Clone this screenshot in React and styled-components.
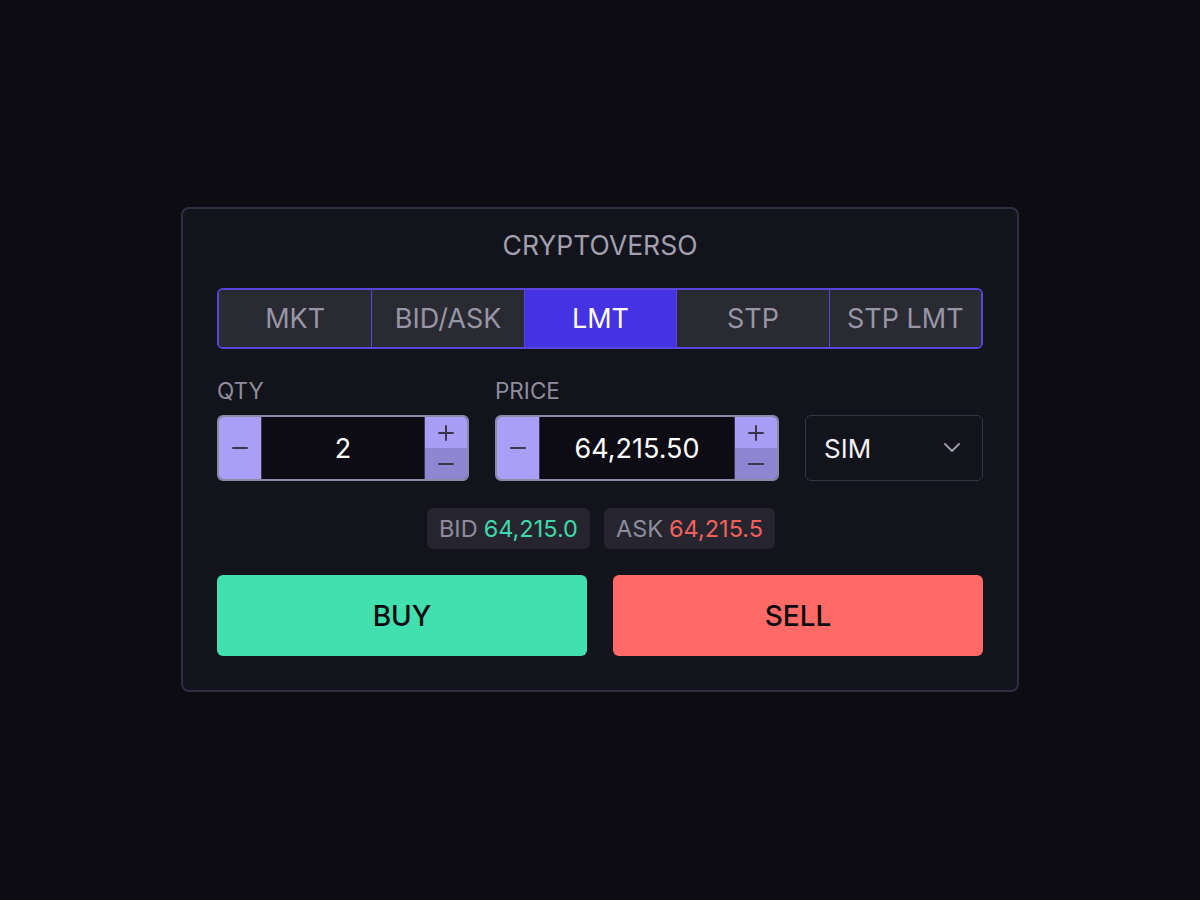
import React from "react";
import styled, { createGlobalStyle } from "styled-components";

const Global = createGlobalStyle`
  html, body { margin: 0; padding: 0; background: #0c0c12; }
  body { font-family: Inter, "Noto Sans", sans-serif; }
  * { box-sizing: border-box; }
`;

const Page = styled.div`
  width: 1200px;
  height: 900px;
  display: flex;
  align-items: flex-start;
  justify-content: center;
  padding-top: 207px;
  background: #0c0c12;
`;

const Card = styled.div`
  width: 838px;
  background: #13131c;
  border: 2px solid #302f42;
  border-radius: 8px;
  padding: 20px 34px 34px;
  display: flex;
  flex-direction: column;
`;

const Title = styled.div`
  text-align: center;
  font-size: 26.5px;
  line-height: 32px;
  color: #a2a0b0;
`;

const Tabs = styled.div`
  margin-top: 27px;
  display: grid;
  grid-template-columns: repeat(5, 1fr);
  height: 61px;
  border: 2px solid #5a46dc;
  border-radius: 6px;
  overflow: hidden;
`;

const Tab = styled.div`
  display: flex;
  align-items: center;
  justify-content: center;
  font-size: 27px;
  color: ${(p) => (p.$active ? "#ffffff" : "#9896a6")};
  background: ${(p) => (p.$active ? "#4532e2" : "#2a2a33")};
  border-left: ${(p) => (p.$first ? "none" : "1px solid #5a46dc")};
`;

const Fields = styled.div`
  margin-top: 28px;
  display: grid;
  grid-template-columns: 252px 284px 1fr;
  column-gap: 26px;
  align-items: end;
`;

const Field = styled.div`
  display: flex;
  flex-direction: column;
  gap: 11px;
`;

const Label = styled.div`
  font-size: 22.5px;
  line-height: 27px;
  color: #8f8d9c;
`;

const Stepper = styled.div`
  height: 66px;
  display: grid;
  grid-template-columns: 42px 1fr 42px;
  border: 2px solid #8c89a6;
  border-radius: 6px;
  overflow: hidden;
  background: #0d0c14;
`;

const SideBtn = styled.div`
  display: flex;
  align-items: center;
  justify-content: center;
  background: ${(p) => p.$bg || "#aa9ef7"};
`;

const Value = styled.div`
  display: flex;
  align-items: center;
  justify-content: center;
  font-size: 27px;
  color: #ffffff;
  background: #0d0c14;
  border-left: 1px solid #3a3850;
  border-right: 1px solid #3a3850;
`;

const RightCol = styled.div`
  display: grid;
  grid-template-rows: 1fr 1fr;
`;

const Select = styled.div`
  height: 66px;
  border: 1px solid #363545;
  border-radius: 6px;
  display: flex;
  align-items: center;
  justify-content: space-between;
  padding: 0 20px 0 18px;
  font-size: 26px;
  color: #f2f2f6;
`;

const Quotes = styled.div`
  margin-top: 27px;
  display: flex;
  justify-content: center;
  gap: 14px;
  padding-left: 2px;
`;

const Chip = styled.div`
  height: 41px;
  padding: 0 12px;
  display: flex;
  align-items: center;
  gap: 6px;
  background: #26252f;
  border-radius: 6px;
  font-size: 23.5px;
  color: #8f8d9c;
`;

const Num = styled.span`
  color: ${(p) => p.$color};
`;

const Actions = styled.div`
  margin-top: 26px;
  display: grid;
  grid-template-columns: 1fr 1fr;
  column-gap: 26px;
`;

const Action = styled.button`
  height: 81px;
  border: none;
  border-radius: 6px;
  background: ${(p) => p.$bg};
  color: #0a0a10;
  font-family: Inter, "Noto Sans", sans-serif;
  font-size: 28px;
  font-weight: 500;
  cursor: pointer;
`;

const Minus = () => (
  <svg width="18" height="18" viewBox="0 0 18 18">
    <line x1="2" y1="9" x2="16" y2="9" stroke="#3a3650" strokeWidth="2" strokeLinecap="round" />
  </svg>
);

const Plus = () => (
  <svg width="18" height="18" viewBox="0 0 18 18">
    <line x1="2" y1="9" x2="16" y2="9" stroke="#3a3650" strokeWidth="2" strokeLinecap="round" />
    <line x1="9" y1="2" x2="9" y2="16" stroke="#3a3650" strokeWidth="2" strokeLinecap="round" />
  </svg>
);

const Chevron = () => (
  <svg width="20" height="12" viewBox="0 0 20 12">
    <polyline points="3,2 10,9 17,2" fill="none" stroke="#9a98a8" strokeWidth="2" strokeLinecap="round" strokeLinejoin="round" />
  </svg>
);

const StepField = ({ label, value }) => (
  <Field>
    <Label>{label}</Label>
    <Stepper>
      <SideBtn><Minus /></SideBtn>
      <Value>{value}</Value>
      <RightCol>
        <SideBtn $bg="#a99df6"><Plus /></SideBtn>
        <SideBtn $bg="#8e86d0"><Minus /></SideBtn>
      </RightCol>
    </Stepper>
  </Field>
);

const tabs = ["MKT", "BID/ASK", "LMT", "STP", "STP LMT"];

export default function App() {
  return (
    <Page>
      <Global />
      <Card>
        <Title>CRYPTOVERSO</Title>
        <Tabs>
          {tabs.map((t, i) => (
            <Tab key={t} $first={i === 0} $active={t === "LMT"}>{t}</Tab>
          ))}
        </Tabs>
        <Fields>
          <StepField label="QTY" value="2" />
          <StepField label="PRICE" value="64,215.50" />
          <Select>
            <span>SIM</span>
            <Chevron />
          </Select>
        </Fields>
        <Quotes>
          <Chip>BID <Num $color="#3fd8aa">64,215.0</Num></Chip>
          <Chip>ASK <Num $color="#f4615d">64,215.5</Num></Chip>
        </Quotes>
        <Actions>
          <Action $bg="#41e0ae">BUY</Action>
          <Action $bg="#ff6a66">SELL</Action>
        </Actions>
      </Card>
    </Page>
  );
}
